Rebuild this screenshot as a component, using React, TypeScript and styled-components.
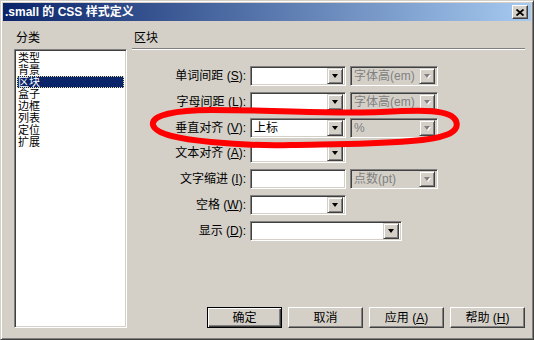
import React from 'react';
import styled, { createGlobalStyle } from 'styled-components';

const GlobalStyle = createGlobalStyle`
  html, body {
    margin: 0;
    padding: 0;
    background: #d4d0c8;
  }
  body {
    font-family: "Liberation Sans", "Noto Sans CJK SC", sans-serif;
    font-size: 12px;
    color: #000;
  }
`;

const Window = styled.div`
  position: relative;
  width: 534px;
  height: 340px;
  box-sizing: border-box;
  background: #d4d0c8;
  border: 1px solid;
  border-color: #d4d0c8 #404040 #404040 #d4d0c8;
  box-shadow: inset 1px 1px #fff, inset -1px -1px #808080;
  padding: 2px;
  display: flex;
  flex-direction: column;
`;

const TitleBar = styled.div`
  height: 18px;
  flex: none;
  display: flex;
  align-items: center;
  justify-content: space-between;
  padding: 0 3px 0 2px;
  background: linear-gradient(to right, #0a246a, #a6caf0);
`;

const Title = styled.span`
  color: #fff;
  font-weight: bold;
  font-size: 12px;
  line-height: 18px;
  white-space: nowrap;
`;

const CloseButton = styled.div`
  width: 16px;
  height: 14px;
  box-sizing: border-box;
  background: #d4d0c8;
  border: 1px solid;
  border-color: #fff #404040 #404040 #fff;
  box-shadow: inset -1px -1px #808080;
  display: flex;
  align-items: center;
  justify-content: center;
`;

const Body = styled.div`
  flex: 1;
  display: flex;
  gap: 5px;
  padding: 10px 6px 9px 11px;
  min-height: 0;
`;

const Sidebar = styled.div`
  width: 113px;
  display: flex;
  flex-direction: column;
`;

const SectionLabel = styled.div`
  line-height: 14px;
  height: 14px;
  padding-left: 2px;
  margin-bottom: 4px;
`;

const sunken = `
  box-sizing: border-box;
  border: 1px solid;
  border-color: #808080 #fff #fff #808080;
  box-shadow: inset 1px 1px #404040, inset -1px -1px #d4d0c8;
`;

const ListBox = styled.div`
  ${sunken}
  flex: 1;
  background: #fff;
  padding: 2px 2px;
  overflow: hidden;
`;

const ListItem = styled.div<{ $selected?: boolean }>`
  height: 12px;
  line-height: 12px;
  font-size: 11px;
  padding-left: 1px;
  white-space: nowrap;
  box-sizing: border-box;
  background: ${(p) => (p.$selected ? '#0a246a' : 'transparent')};
  color: ${(p) => (p.$selected ? '#fff' : '#000')};
  outline: ${(p) => (p.$selected ? '1px dotted #e8e0a0' : 'none')};
  outline-offset: -1px;
`;

const Main = styled.div`
  flex: 1;
  display: flex;
  flex-direction: column;
`;

const Separator = styled.div`
  height: 1px;
  background: #808080;
  border-bottom: 1px solid #fff;
  margin-top: -1px;
`;

const Form = styled.div`
  margin-top: 16px;
  display: grid;
  grid-template-columns: 114px 96px 88px;
  grid-auto-rows: 20px;
  column-gap: 4px;
  row-gap: 5.75px;
`;

const Label = styled.label`
  justify-self: end;
  align-self: center;
  white-space: nowrap;
  line-height: 14px;
`;

const Field = styled.div<{ $disabled?: boolean; $width?: number; $span?: number }>`
  ${sunken}
  height: 20px;
  width: ${(p) => (p.$width ? `${p.$width}px` : 'auto')};
  grid-column: ${(p) => (p.$span ? `span ${p.$span}` : 'auto')};
  background: ${(p) => (p.$disabled ? '#d4d0c8' : '#fff')};
  color: ${(p) => (p.$disabled ? '#808080' : '#000')};
  display: flex;
  align-items: center;
  padding: 2px;
  line-height: 16px;
`;

const FieldText = styled.span`
  flex: 1;
  padding-left: 1px;
  white-space: nowrap;
  overflow: hidden;
`;

const ArrowButton = styled.div<{ $disabled?: boolean }>`
  width: 16px;
  height: 16px;
  flex: none;
  box-sizing: border-box;
  background: #d4d0c8;
  border: 1px solid;
  border-color: #d4d0c8 #404040 #404040 #d4d0c8;
  box-shadow: inset 1px 1px #fff, inset -1px -1px #808080;
  display: flex;
  align-items: center;
  justify-content: center;

  &::after {
    content: '';
    width: 0;
    height: 0;
    border-left: 3.5px solid transparent;
    border-right: 3.5px solid transparent;
    border-top: 4px solid ${(p) => (p.$disabled ? '#808080' : '#000')};
    filter: ${(p) => (p.$disabled ? 'drop-shadow(1px 1px 0 #fff)' : 'none')};
  }
`;

const Footer = styled.div`
  margin-top: auto;
  display: flex;
  justify-content: flex-end;
  gap: 6px;
`;

const Button = styled.div<{ $primary?: boolean }>`
  width: 75px;
  height: 21px;
  box-sizing: border-box;
  background: #d4d0c8;
  display: flex;
  align-items: center;
  justify-content: center;
  line-height: 14px;
  border: 1px solid;
  border-color: ${(p) => (p.$primary ? '#000' : '#fff #404040 #404040 #fff')};
  box-shadow: ${(p) =>
    p.$primary
      ? 'inset 1px 1px #fff, inset -1px -1px #404040, inset -2px -2px #808080'
      : 'inset -1px -1px #808080'};
`;

const Annotation = styled.svg`
  position: absolute;
  left: 0;
  top: 0;
  pointer-events: none;
`;

const categories = ['类型', '背景', '区块', '盒子', '边框', '列表', '定位', '扩展'];

type SelectProps = {
  value?: string;
  disabled?: boolean;
  width?: number;
  span?: number;
};

const Select: React.FC<SelectProps> = ({ value, disabled, width, span }) => (
  <Field $disabled={disabled} $width={width} $span={span}>
    <FieldText>{value}</FieldText>
    <ArrowButton $disabled={disabled} />
  </Field>
);

const Hot: React.FC<{ k: string }> = ({ k }) => (
  <>
    {' ('}
    <u>{k}</u>
    {')'}
  </>
);

const App: React.FC = () => (
  <>
    <GlobalStyle />
    <Window>
      <TitleBar>
        <Title>.small 的 CSS 样式定义</Title>
        <CloseButton>
          <svg width="8" height="7" viewBox="0 0 8 7">
            <path d="M0.5 0.5 L7.5 6.5 M7.5 0.5 L0.5 6.5" stroke="#000" strokeWidth="1.8" />
          </svg>
        </CloseButton>
      </TitleBar>
      <Body>
        <Sidebar>
          <SectionLabel>分类</SectionLabel>
          <ListBox>
            {categories.map((c) => (
              <ListItem key={c} $selected={c === '区块'}>
                {c}
              </ListItem>
            ))}
          </ListBox>
        </Sidebar>
        <Main>
          <SectionLabel>区块</SectionLabel>
          <Separator />
          <Form>
            <Label>
              单词间距<Hot k="S" />:
            </Label>
            <Select />
            <Select disabled value="字体高(em)" />

            <Label>
              字母间距<Hot k="L" />:
            </Label>
            <Select />
            <Select disabled value="字体高(em)" />

            <Label>
              垂直对齐<Hot k="V" />:
            </Label>
            <Select value="上标" />
            <Select disabled value="%" />

            <Label>
              文本对齐<Hot k="A" />:
            </Label>
            <Select />
            <span />

            <Label>
              文字缩进<Hot k="I" />:
            </Label>
            <Field>
              <FieldText />
            </Field>
            <Select disabled value="点数(pt)" />

            <Label>
              空格<Hot k="W" />:
            </Label>
            <Select />
            <span />

            <Label>
              显示<Hot k="D" />:
            </Label>
            <Select width={152} span={2} />
          </Form>
          <Footer>
            <Button $primary>确定</Button>
            <Button>取消</Button>
            <Button>
              应用<Hot k="A" />
            </Button>
            <Button>
              帮助<Hot k="H" />
            </Button>
          </Footer>
        </Main>
      </Body>
      <Annotation width="534" height="340" viewBox="0 0 534 340">
        <path
          d="M210 141 C180 138 155 134 152 124 C150 114 175 109 210 109 C280 109 330 113 380 111 C420 109 450 108 455 120 C460 132 440 138 410 140 C360 144 320 143 290 144 C250 145 230 143 210 141 Z"
          fill="none"
          stroke="#ff0000"
          strokeWidth="6"
          strokeLinecap="round"
          strokeLinejoin="round"
        />
      </Annotation>
    </Window>
  </>
);

export default App;
